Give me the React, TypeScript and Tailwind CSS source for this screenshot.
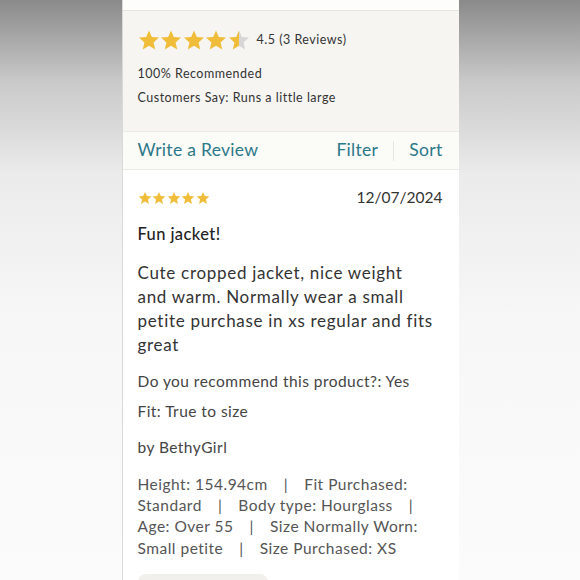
const font = { fontFamily: "Lato, 'Open Sans', sans-serif" };

function Star({ size, fill = 1 }: { size: number; fill?: number }) {
  const id = `half-${size}-${fill}`;
  return (
    <svg width={size} height={size} viewBox="0 0 24 24">
      <defs>
        <linearGradient id={id} x1="0" x2="1" y1="0" y2="0">
          <stop offset={fill} stopColor="#efbd3a" />
          <stop offset={fill} stopColor="#d6d6d6" />
        </linearGradient>
      </defs>
      <path
        d="M12 1.5l3.1 7.2 7.8.7-5.9 5.2 1.8 7.7L12 18.2l-6.8 4.1 1.8-7.7-5.9-5.2 7.8-.7z"
        fill={`url(#${id})`}
      />
    </svg>
  );
}

const body = [
  "Cute cropped jacket, nice weight",
  "and warm. Normally wear a small",
  "petite purchase in xs regular and fits",
  "great",
];

const detailLines = [
  ["Height: 154.94cm", "Fit Purchased:"],
  ["Standard", "Body type: Hourglass", ""],
  ["Age: Over 55", "Size Normally Worn:"],
  ["Small petite", "Size Purchased: XS"],
];

export default function App() {
  return (
    <div
      className="flex h-[580px] w-[580px] justify-center overflow-hidden bg-[linear-gradient(to_bottom,#8a8a8a_0%,#c9c9c9_14%,#ebebeb_30%,#f7f7f7_55%,#fbfbfb_100%)]"
      style={font}
    >
      <div className="flex w-[337px] flex-col border-l border-[#d9d9d9] bg-white">
        <div className="h-[11px] shrink-0 border-b border-[#e4e3de] bg-[#fdfdfb]" />

        <div className="flex h-[120px] shrink-0 flex-col bg-[#f6f5f2] px-[15px] pt-[18px] text-[12.5px] tracking-[0.5px] text-[#333]">
          <div className="flex items-center gap-[7px]">
            <div className="flex gap-[0.5px]">
              <Star size={22} />
              <Star size={22} />
              <Star size={22} />
              <Star size={22} />
              <Star size={22} fill={0.5} />
            </div>
            <span>4.5 (3 Reviews)</span>
          </div>
          <p className="mt-[14px]">100% Recommended</p>
          <p className="mt-[5px]">Customers Say: Runs a little large</p>
        </div>

        <div className="flex h-[39px] shrink-0 items-center border-y border-[#ebeae5] bg-[#fbfbf8] px-[15px] text-[17.5px] tracking-[0.3px] text-[#2b7889]">
          <span>Write a Review</span>
          <span className="ml-auto">Filter</span>
          <span className="mx-[15px] h-[20px] w-px bg-[#e6e6e1]" />
          <span className="pr-[1px]">Sort</span>
        </div>

        <div className="flex flex-col px-[15px] pt-[16px]">
          <div className="flex items-center justify-between">
            <div className="flex gap-[0.5px]">
              <Star size={14} />
              <Star size={14} />
              <Star size={14} />
              <Star size={14} />
              <Star size={14} />
            </div>
            <span className="pr-[1px] text-[15.5px] text-[#333]">12/07/2024</span>
          </div>

          <p className="mt-[13px] text-[16.5px] font-medium tracking-[0.4px] text-[#222]">Fun jacket!</p>

          <p className="mt-[14px] whitespace-nowrap text-[17px] leading-[24px] tracking-[0.7px] text-[#333]">
            {body.map((l, i) => (
              <span key={i} className="block">
                {l}
              </span>
            ))}
          </p>

          <p className="mt-[13px] text-[15.5px] tracking-[0.45px] text-[#444]">
            Do you recommend this product?: Yes
          </p>
          <p className="mt-[7px] text-[15.5px] tracking-[0.45px] text-[#444]">Fit: True to size</p>
          <p className="mt-[12px] text-[15.5px] tracking-[0.45px] text-[#444]">by BethyGirl</p>

          <div className="mt-[15px] whitespace-nowrap text-[15.5px] leading-[21.3px] tracking-[0.5px] text-[#555]">
            {detailLines.map((parts, i) => (
              <div key={i} className="flex gap-[16px]">
                {parts.map((p, j) => (
                  <span key={j} className="flex gap-[16px]">
                    {j > 0 && <span>|</span>}
                    {p && <span>{p}</span>}
                  </span>
                ))}
              </div>
            ))}
          </div>

          <div className="mt-[15px] h-[30px] w-[130px] rounded-[8px] bg-[#f1f0ec]" />
        </div>
      </div>
    </div>
  );
}
